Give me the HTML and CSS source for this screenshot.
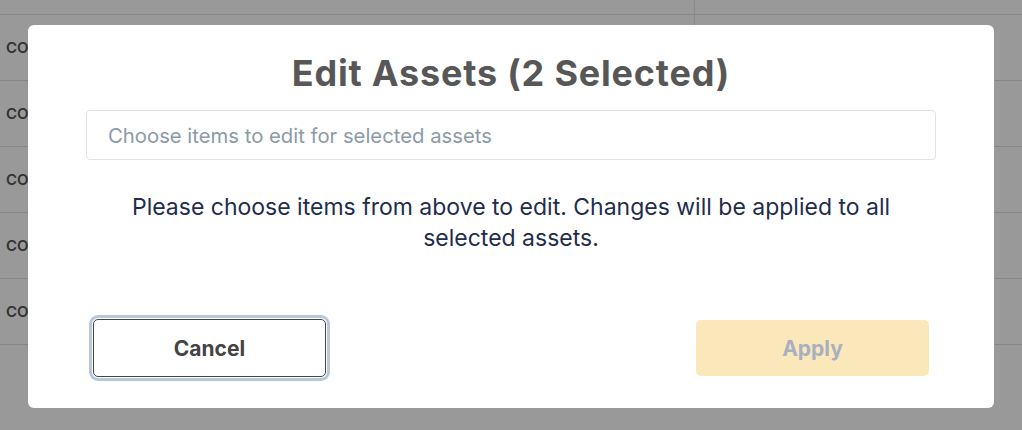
FILE: index.html
```html
<!DOCTYPE html>
<html lang="en">
<head>
  <meta name="viewport" content="width=device-width, initial-scale=1.0">
  <title>Edit Assets</title>
  <link rel="stylesheet" href="styles.css">
</head>
<body>
  <!-- Table behind the dialog -->
  <div class="page">
    <div class="row row-head">
      <div class="cell-main"></div>
      <div class="cell-side"></div>
    </div>
    <div class="row"><div class="cell-main">COM-0001</div><div class="cell-side"></div></div>
    <div class="row"><div class="cell-main">COM-0002</div><div class="cell-side"></div></div>
    <div class="row"><div class="cell-main">COM-0003</div><div class="cell-side"></div></div>
    <div class="row"><div class="cell-main">COM-0004</div><div class="cell-side"></div></div>
    <div class="row"><div class="cell-main">COM-0005</div><div class="cell-side"></div></div>
  </div>

  <div class="overlay">
    <div class="modal">
      <h1 class="modal-title">Edit Assets (2 Selected)</h1>
      <input type="text" class="picker" placeholder="Choose items to edit for selected assets" />
      <p class="hint">Please choose items from above to edit. Changes will be applied to all selected assets.</p>
      <div class="actions">
        <button class="btn btn-cancel">Cancel</button>
        <button class="btn btn-apply" disabled>Apply</button>
      </div>
    </div>
  </div>
</body>
</html>
```

FILE: styles.css
```css
body {
  margin: 0;
  font-family: "Inter", "Noto Sans", sans-serif;
  background: #fff;
  overflow: hidden;
}

.page {
  height: 430px;
}

.row {
  display: flex;
  height: 65px;
  border-bottom: 1px solid #dcdfe3;
}

.row-head {
  height: 14px;
}

.cell-main {
  width: 695px;
  border-right: 1px solid #e4e6e9;
  display: flex;
  align-items: center;
  padding-left: 6px;
  box-sizing: border-box;
  font-size: 15px;
  font-weight: 600;
  color: #555;
}

.overlay {
  position: fixed;
  inset: 0;
  background: rgba(0, 0, 0, 0.4);
  display: flex;
  justify-content: center;
  align-items: flex-start;
  padding-top: 25px;
}

.modal {
  width: 966px;
  height: 383px;
  box-sizing: border-box;
  padding: 24px 58px 0;
  background: #fff;
  border-radius: 6px;
  display: flex;
  flex-direction: column;
}

.modal-title {
  margin: 0;
  text-align: center;
  font-size: 36px;
  line-height: 48px;
  letter-spacing: 0.8px;
  font-weight: 700;
  color: #575757;
}

.picker {
  margin-top: 13px;
  height: 50px;
  box-sizing: border-box;
  border: 1px solid #dde3e8;
  border-radius: 4px;
  padding: 0 21px;
  font-family: inherit;
  font-size: 20.3px;
  color: #333;
}

.picker::placeholder {
  color: #8c9aa8;
}

.hint {
  width: 820px;
  margin: 32px auto 0;
  text-align: center;
  font-size: 23px;
  line-height: 31px;
  color: #1f2d4d;
}

.actions {
  display: flex;
  justify-content: space-between;
  align-items: center;
  margin-top: 65px;
  padding: 0 7px;
}

.btn {
  width: 233px;
  border-radius: 5px;
  font-family: inherit;
  font-size: 21px;
  font-weight: 700;
}

.btn-cancel {
  height: 58px;
  background: #fff;
  border: 1px solid #444;
  color: #444;
  box-shadow: 0 0 0 1px #fff, 0 0 0 4px #b8c8dc;
}

.btn-apply {
  height: 56px;
  background: #fae8bb;
  border: none;
  color: #a8b0c0;
}
```
